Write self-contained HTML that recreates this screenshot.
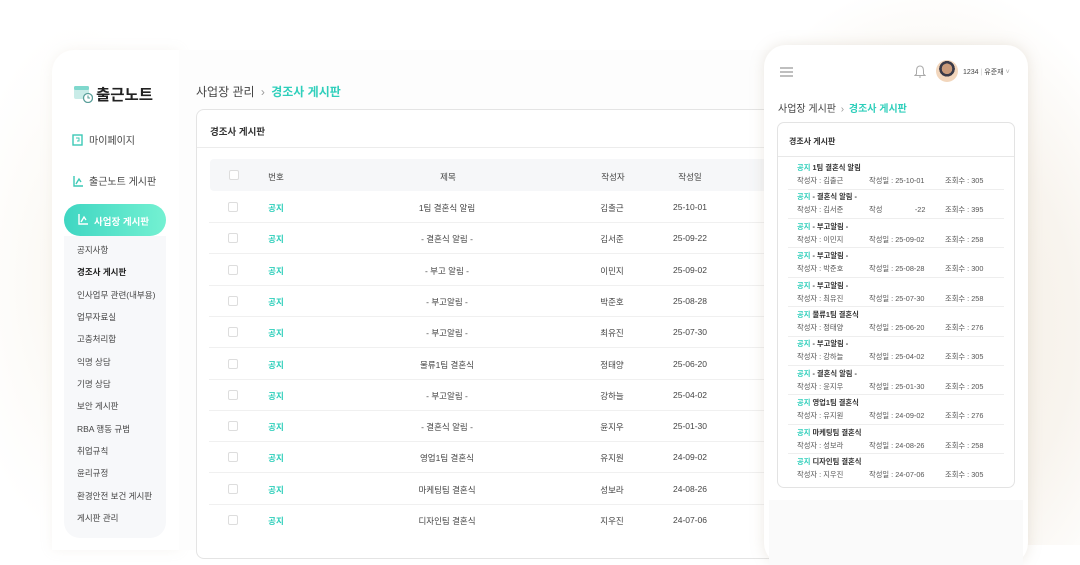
<!DOCTYPE html>
<html><head><meta charset="utf-8"><style>
*{box-sizing:border-box;margin:0;padding:0}
body{width:1080px;height:545px;overflow:hidden;background:#fff;font-family:"Liberation Sans","Noto Sans CJK KR",sans-serif;color:#333;position:relative}
.glow{position:absolute;left:700px;top:0;width:380px;height:545px;background:radial-gradient(ellipse at 60% 60%,#f3ede2 0%,#f8f4ee 45%,rgba(255,255,255,0) 75%)}
.glowl{position:absolute;left:0;top:20px;width:200px;height:525px;background:radial-gradient(ellipse at 40% 50%,#faf7f1 0%,rgba(255,255,255,0) 70%)}
.side{position:absolute;left:52px;top:50px;width:127px;height:500px;background:#fff;border-radius:22px 0 0 0;box-shadow:0 0 12px rgba(200,190,170,.15)}
.main{position:absolute;left:179px;top:50px;width:600px;height:500px;background:#fdfdfd}
.logo{position:absolute;left:73px;top:83px;font-size:15.5px;font-weight:bold;color:#222}
.nav{position:absolute;left:72px;font-size:10px;color:#444}
.pill{position:absolute;left:64px;top:204px;width:102px;height:32px;border-radius:16px;background:linear-gradient(90deg,#3fd6c2,#74f1d2);color:#fff;font-size:9.5px;font-weight:bold;padding:10px 0 0 30px}
.sub{position:absolute;left:64px;top:236px;width:102px;height:302px;background:#f7f8fa;border-radius:0 0 16px 16px}
.sub div{position:absolute;left:13px;font-size:8.5px;color:#444;white-space:nowrap}
.bc{position:absolute;left:196px;top:83px;font-size:12px;color:#444}
.bc b{color:#2fcfbb}
.card{position:absolute;left:196px;top:109px;width:600px;height:450px;background:#fff;border:1px solid #e4e4e4;border-radius:8px}
.ct{position:absolute;left:13px;top:14px;font-size:9.5px;font-weight:bold;color:#333}
.hr{position:absolute;left:0;top:37px;width:100%;height:1px;background:#ececec}
.th{position:absolute;left:13px;top:49px;width:590px;height:32px;background:#f6f7f9;border-radius:4px}
.cell{position:absolute;font-size:8.5px;color:#444;transform:translateX(-50%);white-space:nowrap}
.cb{position:absolute;left:32px;width:10px;height:10px;border:1px solid #ddd;border-radius:2px;background:#fff}
.rl{position:absolute;left:13px;width:590px;height:1px;background:#f0f0f0}
.g{color:#2fcfbb;font-weight:bold}
.phone{position:absolute;left:764px;top:45px;width:264px;height:520px;background:#fff;border-radius:22px;box-shadow:0 0 14px rgba(180,165,140,.25)}
.pc{position:absolute;left:13px;top:77px;width:238px;height:366px;border:1px solid #e3e3e3;border-radius:7px;background:#fff}
.it{position:absolute;left:19px;font-size:7.3px;color:#333;white-space:nowrap}
.it .t{font-weight:bold}
.it .m{color:#555;margin-top:3px;position:relative;height:10px}
.it .m span{position:absolute}
.il{position:absolute;left:11px;width:216px;height:1px;background:#eee}
</style></head><body>
<div class="glow"></div><div class="glowl"></div>
<div class="side"></div>
<div class="main"></div>
<div class="logo"><svg width="20" height="20" viewBox="0 0 20 20" style="vertical-align:-3px;margin-right:3px"><rect x="1" y="3" width="15" height="13" rx="2" fill="#c9ece8"/><rect x="1" y="3" width="15" height="4" rx="1.5" fill="#7fd8cd"/><circle cx="15" cy="15" r="4.5" fill="#fff" stroke="#5a9f9a" stroke-width="1.3"/><path d="M15 12.5V15h2" stroke="#5a9f9a" stroke-width="1.1" fill="none"/></svg>출근노트</div>
<div class="nav" style="top:132px"><svg width="11" height="12" style="vertical-align:-2px;margin-right:6px"><rect x="1" y="1" width="9" height="10" fill="none" stroke="#3cc9b6" stroke-width="1.4"/><path d="M4 4h3v3H5" fill="none" stroke="#3cc9b6" stroke-width="1"/></svg>마이페이지</div>
<div class="nav" style="top:173px"><svg width="11" height="12" style="vertical-align:-2px;margin-right:6px"><path d="M2 1v10h9M4 9l3-5 2 3" fill="none" stroke="#3cc9b6" stroke-width="1.4"/></svg>출근노트 게시판</div>
<div class="pill">사업장 게시판</div>
<svg style="position:absolute;left:77px;top:213px" width="11" height="12"><path d="M2 1v10h9M4 9l3-5 2 3" fill="none" stroke="#fff" stroke-width="1.4"/></svg>
<div class="sub">
<div style="top:8px">공지사항</div>
<div style="top:30px;font-weight:bold;color:#222">경조사 게시판</div>
<div style="top:53px">인사업무 관련(내부용)</div>
<div style="top:75px">업무자료실</div>
<div style="top:97px">고충처리함</div>
<div style="top:120px">익명 상담</div>
<div style="top:142px">기명 상담</div>
<div style="top:164px">보안 게시판</div>
<div style="top:187px">RBA 행동 규범</div>
<div style="top:209px">취업규칙</div>
<div style="top:231px">윤리규정</div>
<div style="top:254px">환경안전 보건 게시판</div>
<div style="top:276px">게시판 관리</div>
</div>
<div class="bc">사업장 관리 <span style="color:#999;margin:0 3px">›</span> <b>경조사 게시판</b></div>
<div class="card">
<div class="ct">경조사 게시판</div><div class="hr"></div>
<div class="th"></div>
<div class="cb" style="top:60px"></div>
<div class="cell" style="left:79px;top:61px">번호</div>
<div class="cell" style="left:251px;top:61px">제목</div>
<div class="cell" style="left:416px;top:61px">작성자</div>
<div class="cell" style="left:493px;top:61px">작성일</div>
</div>
<div id="rows"></div>
<div class="phone">
<svg style="position:absolute;left:16px;top:22px" width="13" height="10"><path d="M0 1h13M0 5h13M0 9h13" stroke="#999" stroke-width="1.2"/></svg>
<svg style="position:absolute;left:150px;top:20px" width="12" height="13"><path d="M6 1C3 1 2.5 4 2.5 6v3L1 10.5h10L9.5 9V6C9.5 4 9 1 6 1zM5 12h2" fill="none" stroke="#aaa" stroke-width="1"/></svg>
<div style="position:absolute;left:172px;top:15px;width:22px;height:22px;border-radius:50%;background:radial-gradient(circle at 50% 40%,#c99a7a 0 30%,#3a3a48 31% 45%,#f2d6bc 46%)"></div>
<div style="position:absolute;left:199px;top:22px;font-size:7px;color:#444">1234 <span style="color:#ccc">|</span> 유준재 <span style="color:#aaa">˅</span></div>
<div style="position:absolute;left:14px;top:55px;font-size:10px;color:#444">사업장 게시판 <span style="color:#999;margin:0 2px">›</span> <b style="color:#2fcfbb">경조사 게시판</b></div>
<div class="pc"><div style="position:absolute;left:11px;top:13px;font-size:8px;font-weight:bold">경조사 게시판</div><div style="position:absolute;left:0;top:33px;width:100%;height:1px;background:#e8e8e8"></div></div>
<div style="position:absolute;left:5px;top:455px;width:254px;height:65px;background:#fafafa"></div>
<div id="pitems"></div>
</div>
<script>
var R=[["1팀 결혼식 알림","김출근","25-10-01"],["- 결혼식 알림 -","김서준","25-09-22"],["- 부고 알림 -","이민지","25-09-02"],["- 부고알림 -","박준호","25-08-28"],["- 부고알림 -","최유진","25-07-30"],["물류1팀 결혼식","정태양","25-06-20"],["- 부고알림 -","강하늘","25-04-02"],["- 결혼식 알림 -","윤지우","25-01-30"],["영업1팀 결혼식","유지원","24-09-02"],["마케팅팀 결혼식","성보라","24-08-26"],["디자인팀 결혼식","지우진","24-07-06"]];
var h="";R.forEach(function(r,i){var y=202+i*31.3;h+='<div class="cb" style="left:228px;top:'+(y)+'px"></div><div class="cell g" style="left:276px;top:'+y+'px">공지</div><div class="cell" style="left:447px;top:'+y+'px">'+r[0]+'</div><div class="cell" style="left:612px;top:'+y+'px">'+r[1]+'</div><div class="cell" style="left:690px;top:'+y+'px">'+r[2]+'</div>';if(i<10)h+='<div class="rl" style="left:209px;top:'+(y+20)+'px"></div>';});
document.getElementById("rows").innerHTML=h;
var P=[["1팀 결혼식 알림","김출근","25-10-01","305"],["- 결혼식 알림 -","김서준","25-09-22","395"],["- 부고알림 -","이민지","25-09-02","258"],["- 부고알림 -","박준호","25-08-28","300"],["- 부고알림 -","최유진","25-07-30","258"],["물류1팀 결혼식","정태양","25-06-20","276"],["- 부고알림 -","강하늘","25-04-02","305"],["- 결혼식 알림 -","윤지우","25-01-30","205"],["영업1팀 결혼식","유지원","24-09-02","276"],["마케팅팀 결혼식","성보라","24-08-26","258"],["디자인팀 결혼식","지우진","24-07-06","305"]];
h="";P.forEach(function(p,i){var y=118+i*29.4;var d=i==1?'작성&nbsp;&nbsp;&nbsp;&nbsp;&nbsp;&nbsp;&nbsp;&nbsp;&nbsp;&nbsp;&nbsp;&nbsp;&nbsp;&nbsp;&nbsp;&nbsp;-22':'작성일 : '+p[2];h+='<div class="it" style="left:33px;top:'+y+'px"><div class="t"><span class="g">공지</span> '+p[0]+'</div><div class="m"><span style="left:0">작성자 : '+p[1]+'</span><span style="left:72px">'+d+'</span><span style="left:148px">조회수 : '+p[3]+'</span></div></div>';if(i<10)h+='<div class="il" style="left:24px;top:'+(y+25.5)+'px"></div>';});
document.getElementById("pitems").innerHTML=h;
</script>
</body></html>
